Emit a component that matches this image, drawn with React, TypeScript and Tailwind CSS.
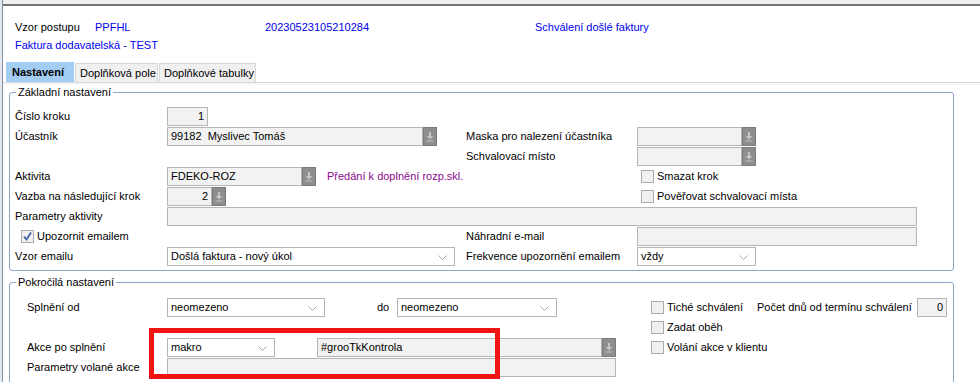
import React from "react";

const Btn = () => (
  <div className="w-[14px] h-[19px] bg-[#8e8e8e] border border-[#7a7a7a] flex items-center justify-center shrink-0">
    <svg width="8" height="11" viewBox="0 0 8 11">
      <rect x="3" y="1" width="2" height="4" fill="#c4c4c4" />
      <path d="M0.5 5 L7.5 5 L4 8.5 Z" fill="#c4c4c4" />
      <rect x="0.5" y="9.5" width="7" height="1" fill="#c4c4c4" />
    </svg>
  </div>
);

const TextBox = ({ w, value = "", right = false }: { w: string; value?: string; right?: boolean }) => (
  <div
    className={`${w} h-[19px] border border-[#b5b5b5] bg-[#f2f2f2] flex items-center px-[3px] shrink-0 whitespace-pre ${
      right ? "justify-end" : ""
    }`}
  >
    {value}
  </div>
);

const Lookup = ({ w, value = "", right = false }: { w: string; value?: string; right?: boolean }) => (
  <div className="flex shrink-0">
    <TextBox w={w} value={value} right={right} />
    <Btn />
  </div>
);

const Combo = ({ w, value = "" }: { w: string; value?: string }) => (
  <div className={`${w} h-[19px] border border-[#b5b5b5] bg-white flex items-center justify-between pl-[3px] pr-[7px] shrink-0`}>
    <span>{value}</span>
    <svg width="9" height="6" viewBox="0 0 9 6" className="mt-[3px]">
      <path d="M0.5 0.5 L4.5 4.5 L8.5 0.5" fill="none" stroke="#a8a8a8" strokeWidth="1" />
    </svg>
  </div>
);

const Check = ({ label, checked = false }: { label: string; checked?: boolean }) => (
  <div className="flex items-center">
    <div className="w-[13px] h-[13px] border border-[#ababab] bg-[#f0f0f0] flex items-center justify-center shrink-0">
      {checked && (
        <svg width="11" height="11" viewBox="0 0 11 11">
          <path d="M2 5.5 L4.5 8.5 L9 1.5" fill="none" stroke="#3f63a8" strokeWidth="1.8" />
        </svg>
      )}
    </div>
    <span className="ml-[3px]">{label}</span>
  </div>
);

const Row = ({ children }: { children: React.ReactNode }) => <div className="flex items-center h-[20px]">{children}</div>;

export default function App() {
  return (
    <div className="w-[980px] h-[382px] bg-white overflow-hidden relative flex font-['Liberation_Sans',Arial,sans-serif] text-[11px] text-black leading-[14px]">
      <div className="w-[3px] h-full bg-[#e4e7ec] border-r border-[#8090aa] shrink-0" />
      <div className="flex-1 flex flex-col">
        <div className="h-[4px] bg-[#f0f0f0] shrink-0" />
        <div className="h-[2px] bg-[#757575] shrink-0" />
        <div className="pl-[12px] pt-[12px] shrink-0">
          <div className="flex items-center h-[18px]">
            <span className="w-[80px]">Vzor postupu</span>
            <span className="w-[170px] text-[#0000ee]">PPFHL</span>
            <span className="w-[270px] text-[#0000ee]">20230523105210284</span>
            <span className="text-[#0000ee]">Schválení došlé faktury</span>
          </div>
          <div className="flex items-center h-[18px] text-[#0000ee]">Faktura dodavatelská - TEST</div>
        </div>
        <div className="mt-[9px] h-[20px] flex items-end pl-[3px] border-b border-[#d8d8d8] shrink-0">
          <div className="h-[20px] w-[68px] bg-[#a3cdf3] font-bold flex items-center pl-[6px]">Nastavení</div>
          <div className="h-[19px] w-[83px] ml-[1px] bg-[#f0f0f0] border border-b-0 border-[#d6d6d6] flex items-center pl-[4px]">
            Doplňková pole
          </div>
          <div className="h-[19px] w-[97px] ml-[1px] bg-[#f0f0f0] border border-b-0 border-[#d6d6d6] flex items-center pl-[4px]">
            Doplňkové tabulky
          </div>
        </div>
        <div className="h-[2px] bg-[#f7f7f7] shrink-0" />

        <fieldset className="ml-[6px] w-[945px] border border-[#8ba7ca] rounded-[3px] pb-[4px] shrink-0">
          <legend className="ml-[6px] px-[2px] leading-[14px]">Základní nastavení</legend>
          <div className="pl-[5px] pt-[7px]">
            <Row>
              <div className="w-[152px]">Číslo kroku</div>
              <TextBox w="w-[41px]" value="1" right />
            </Row>
            <Row>
              <div className="w-[451px] flex items-center">
                <div className="w-[152px]">Účastník</div>
                <Lookup w="w-[256px]" value="99182  Myslivec Tomáš" />
              </div>
              <div className="w-[171px]">Maska pro nalezení účastníka</div>
              <Lookup w="w-[105px]" />
            </Row>
            <Row>
              <div className="w-[451px]" />
              <div className="w-[171px]">Schvalovací místo</div>
              <Lookup w="w-[105px]" />
            </Row>
            <Row>
              <div className="w-[451px] flex items-center">
                <div className="w-[152px]">Aktivita</div>
                <Lookup w="w-[135px]" value="FDEKO-ROZ" />
                <span className="ml-[11px] text-[#8b0a8b]">Předání k doplnění rozp.skl.</span>
              </div>
              <div className="pl-[175px]">
                <Check label="Smazat krok" />
              </div>
            </Row>
            <Row>
              <div className="w-[451px] flex items-center">
                <div className="w-[152px]">Vazba na následující krok</div>
                <Lookup w="w-[45px]" value="2" right />
              </div>
              <div className="pl-[175px]">
                <Check label="Pověřovat schvalovací místa" />
              </div>
            </Row>
            <Row>
              <div className="w-[152px]">Parametry aktivity</div>
              <TextBox w="w-[750px]" />
            </Row>
            <Row>
              <div className="w-[451px] pl-[6px]">
                <Check label="Upozornit emailem" checked />
              </div>
              <div className="w-[171px]">Náhradní e-mail</div>
              <TextBox w="w-[280px]" />
            </Row>
            <Row>
              <div className="w-[451px] flex items-center">
                <div className="w-[152px]">Vzor emailu</div>
                <Combo w="w-[288px]" value="Došlá faktura - nový úkol" />
              </div>
              <div className="w-[171px]">Frekvence upozornění emailem</div>
              <Combo w="w-[119px]" value="vždy" />
            </Row>
          </div>
        </fieldset>

        <fieldset className="mt-[4px] ml-[6px] w-[945px] border border-[#8ba7ca] rounded-[3px] pb-[10px] shrink-0">
          <legend className="ml-[6px] px-[2px] leading-[14px]">Pokročilá nastavení</legend>
          <div className="pl-[17px] pt-[8px]">
            <Row>
              <div className="w-[624px] flex items-center">
                <div className="w-[140px]">Splnění od</div>
                <Combo w="w-[158px]" value="neomezeno" />
                <div className="w-[52px]" />
                <div className="w-[20px]">do</div>
                <Combo w="w-[160px]" value="neomezeno" />
              </div>
              <div className="w-[106px]">
                <Check label="Tiché schválení" />
              </div>
              <div className="w-[160px]">Počet dnů od termínu schválení</div>
              <TextBox w="w-[30px]" value="0" right />
            </Row>
            <Row>
              <div className="w-[624px]" />
              <Check label="Zadat oběh" />
            </Row>
            <Row>
              <div className="w-[624px] flex items-center">
                <div className="w-[140px]">Akce po splnění</div>
                <Combo w="w-[108px]" value="makro" />
                <div className="w-[42px]" />
                <Lookup w="w-[285px]" value="#grooTkKontrola" />
              </div>
              <Check label="Volání akce v klientu" />
            </Row>
            <Row>
              <div className="w-[140px]">Parametry volané akce</div>
              <TextBox w="w-[449px]" />
            </Row>
          </div>
        </fieldset>
      </div>
      <div className="absolute left-[149px] top-[328px] w-[351px] h-[51px] border-[5px] border-[#f01414]" />
    </div>
  );
}
